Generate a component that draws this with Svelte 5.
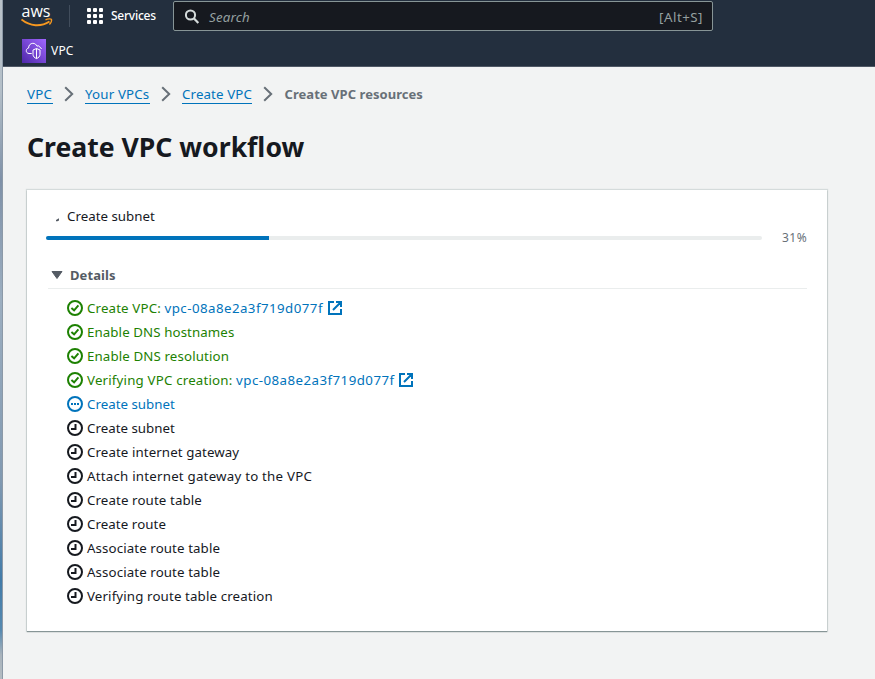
<script>
  const crumbs = [
    { label: 'VPC', width: 26, spacing: 0.3 },
    { label: 'Your VPCs', width: 65, spacing: 0.17 },
    { label: 'Create VPC', width: 70, spacing: 0.13 }
  ];
  const steps = [
    { state: 'done', text: 'Create VPC: ', spacing: 0.14, link: 'vpc-08a8e2a3f719d077f' },
    { state: 'done', text: 'Enable DNS hostnames', spacing: 0.09 },
    { state: 'done', text: 'Enable DNS resolution', spacing: 0.12 },
    { state: 'done', text: 'Verifying VPC creation: ', spacing: 0.18, link: 'vpc-08a8e2a3f719d077f' },
    { state: 'active', text: 'Create subnet', spacing: 0.02 },
    { state: 'pending', text: 'Create subnet', spacing: 0.02 },
    { state: 'pending', text: 'Create internet gateway', spacing: 0.09 },
    { state: 'pending', text: 'Attach internet gateway to the VPC', spacing: 0.22 },
    { state: 'pending', text: 'Create route table', spacing: 0.11 },
    { state: 'pending', text: 'Create route', spacing: 0.07 },
    { state: 'pending', text: 'Associate route table', spacing: 0.1 },
    { state: 'pending', text: 'Associate route table', spacing: 0.1 },
    { state: 'pending', text: 'Verifying route table creation', spacing: 0.13 }
  ];
  const progress = 31;
  const cells = [0, 1, 2, 3, 4, 5, 6, 7, 8];
</script>

<div class="window">
  <div class="edge"></div>
  <div class="page">
    <header>
      <div class="topbar">
        <svg class="aws" width="32" height="28" viewBox="0 0 32 28">
          <text x="0.5" y="16.5" textLength="29" lengthAdjust="spacingAndGlyphs">aws</text>
          <path d="M0.5 19.5C9 26.5 20 27 28.5 21.5" fill="none" stroke="#f7981f" stroke-width="1.9" />
          <path d="M24.5 19.8C27 18.6 30 18.7 30.5 19.4C30.8 20.5 29.8 23 28.4 24.5" fill="none" stroke="#f7981f" stroke-width="1.3" />
        </svg>
        <div class="divider"></div>
        <div class="apps">{#each cells as c}<i></i>{/each}</div>
        <span class="services">Services</span>
        <div class="search">
          <svg width="16" height="16" viewBox="0 0 16 16" fill="none" stroke="#d5dbdb" stroke-width="2">
            <circle cx="5.5" cy="6" r="4.6" /><path d="M8.8 9.3L13.3 14" stroke-width="2.2" />
          </svg>
          <em>Search</em>
          <span>[Alt+S]</span>
        </div>
      </div>
      <div class="favorites">
        <svg width="24" height="24" viewBox="0 0 24 24">
          <defs>
            <linearGradient id="violet" x1="0" y1="1" x2="1" y2="0">
              <stop offset="0" stop-color="#4d27a8" /><stop offset="1" stop-color="#a166ff" />
            </linearGradient>
          </defs>
          <rect width="24" height="24" fill="url(#violet)" />
          <g fill="none" stroke="#fff" stroke-width="1">
            <path d="M9.7 14.5H7C5 14.3 4.2 13 4.3 11.6C4.4 10.2 5.3 9.3 6.6 9C6.5 6.2 8.5 4.4 10.8 4.3C12.8 4.2 14.3 5.5 15 7.2C16.5 6.3 17.8 7.1 18 8.6C18.8 8.8 19.4 9.2 19.7 9.8" />
            <path d="M14.5 9.5L18 11V15.5C18 17.4 16.5 18.8 14.5 19.6C12.5 18.8 11 17.4 11 15.5V11ZM14.5 9.5V19.5" />
          </g>
        </svg>
        <span>VPC</span>
      </div>
    </header>
    <main>
      <nav>
        {#each crumbs as crumb}
          <a style:width="{crumb.width}px" style:letter-spacing="{crumb.spacing}px">{crumb.label}</a>
          <svg width="10" height="16" viewBox="0 0 10 16" fill="none" stroke="#687078" stroke-width="2">
            <path d="M1.2 1.2L8.2 8L1.2 14.8" />
          </svg>
        {/each}
        <b>Create VPC resources</b>
      </nav>
      <h1>Create VPC workflow</h1>
      <section>
        <div class="current">
          <svg width="10" height="10" viewBox="0 0 10 10"><path d="M1 8L4 6.3V8.4L2.5 9.3H1Z" fill="#545b64" /></svg>
          <span>Create subnet</span>
        </div>
        <div class="progress">
          <div class="track"><div class="bar" style:width="{progress}%"></div></div>
          <span>{progress}%</span>
        </div>
        <div class="details">
          <svg width="12" height="8" viewBox="0 0 12 8"><path d="M1 .5H11L6 7.5Z" fill="#545b64" stroke="#545b64" stroke-linejoin="round" /></svg>
          <b>Details</b>
        </div>
        <ul>
          {#each steps as step}
            <li class={step.state}>
              <svg class="status" width="16" height="16" viewBox="0 0 16 16" fill="none" stroke="currentColor" stroke-width="2">
                <circle cx="8" cy="8" r="7" />
                {#if step.state === 'done'}
                  <path d="M4.4 8L7.1 10.3L11.4 5.4" />
                {:else if step.state === 'active'}
                  <path d="M4 8H6M7 8H9M10 8H12" />
                {:else}
                  <path d="M8.5 4V9H4" />
                {/if}
              </svg>
              <span class="label" style:letter-spacing="{step.spacing}px">{step.text}{#if step.link}<a>{step.link}</a>{/if}</span>
              {#if step.link}
                <svg class="external" width="14" height="14" viewBox="0 0 14 14" fill="none" stroke="#0073bb" stroke-width="2">
                  <path d="M6 1H1V13H13V8M8 1H13V6M12.5 1.5L5 9" />
                </svg>
              {/if}
            </li>
          {/each}
        </ul>
      </section>
    </main>
  </div>
</div>

<style>
  :global(body) { background: #f2f3f3; overflow: hidden; }
  .window { display: flex; height: 679px; font: 13.3px/20px "Noto Sans", "Open Sans", sans-serif; color: #16191f; box-sizing: border-box; }
  .edge { width: 2px; flex: none; border-right: 1px solid #8c99a7; background: linear-gradient(#b9c2c9 0, #b4bfc8 90px, #7f91a8 180px, #9caec0 300px, #8199b1 480px, #427ba9 580px, #5689b0 630px, #a9b3bc 655px, #b3bcc2 679px); }
  .page { flex: 1; }
  header { height: 66px; background: #232f3e; border-bottom: 1px solid #4f5865; color: #fff; }
  .topbar { display: flex; height: 32px; }
  .aws { margin-left: 18px; flex: none; }
  .aws text { font: 500 17px "Open Sans", sans-serif; fill: #fff; }
  .divider { width: 1px; height: 22px; margin: 5px 0 0 16px; background: #414d5c; }
  .apps { display: grid; grid-template-columns: repeat(3, 4px); gap: 2px; align-content: start; margin: 8px 0 0 17px; width: 16px; }
  .apps i { width: 4px; height: 4px; border-radius: 1px; background: #fff; }
  .services { margin: 6px 0 0 8px; width: 62px; font-size: 12px; font-weight: 500; letter-spacing: -0.25px; }
  .search { box-sizing: border-box; display: flex; width: 540px; height: 30px; margin-top: 1px; padding: 0 9px 0 11px; border: 1px solid #879596; border-radius: 2px; background: #16191f; color: #95a0a0; line-height: 30px; }
  .search svg { margin: 7px 8px 0 0; }
  .search em { flex: 1; letter-spacing: 0.2px; }
  .search span { letter-spacing: 0.5px; }
  .favorites { display: flex; padding: 7px 0 0 19px; font-size: 12px; line-height: 24px; }
  .favorites span { margin-left: 5px; letter-spacing: 0.2px; }
  main { padding: 17px 0 0 24px; }
  nav { display: flex; height: 20px; color: #687078; }
  nav a { box-sizing: border-box; height: 20px; color: #0073bb; border-bottom: 1px solid #0073bb; white-space: nowrap; }
  nav svg { margin: 2px 11px 0; }
  nav b { margin-left: 0.5px; font-size: 13px; letter-spacing: 0.05px; }
  h1 { margin: 26px 0 0; font-size: 26.6px; line-height: 34px; font-weight: 700; letter-spacing: 0; }
  section { box-sizing: border-box; width: 800px; height: 441px; margin-top: 26px; padding: 16px 20px 0; background: #fff; box-shadow: 0 1px 1px #879596, 0 0 1px 1px #d5dbdb; }
  .current { display: flex; height: 20px; letter-spacing: 0.02px; }
  .current svg { margin: 6px 2px 0 8px; }
  .progress { display: flex; align-items: center; height: 24px; font-size: 12px; color: #687078; }
  .progress span { letter-spacing: 0.5px; white-space: nowrap; }
  .track { flex: none; width: 716px; height: 4px; margin: 0 20px 0 -1px; border-radius: 10px; background: #eaeded; overflow: hidden; }
  .bar { height: 100%; padding-right: 1px; background: #0073bb; }
  .details { box-sizing: border-box; display: flex; height: 29px; margin: 10px 0 0 1px; padding: 5px 0 0 3px; border-bottom: 1px solid #eaeded; color: #545b64; font-size: 13px; letter-spacing: 0.1px; }
  .details svg { margin: 6px 7px 0 0; }
  ul { list-style: none; margin: 7px 0 0 20px; padding: 0; }
  li { display: flex; height: 24px; align-items: center; white-space: pre; }
  .status { margin-right: 4px; }
  .done { color: #1d8102; }
  .active { color: #0073bb; }
  li a { color: #0073bb; letter-spacing: 0.45px; }
  .external { margin-left: 4.6px; }
</style>
